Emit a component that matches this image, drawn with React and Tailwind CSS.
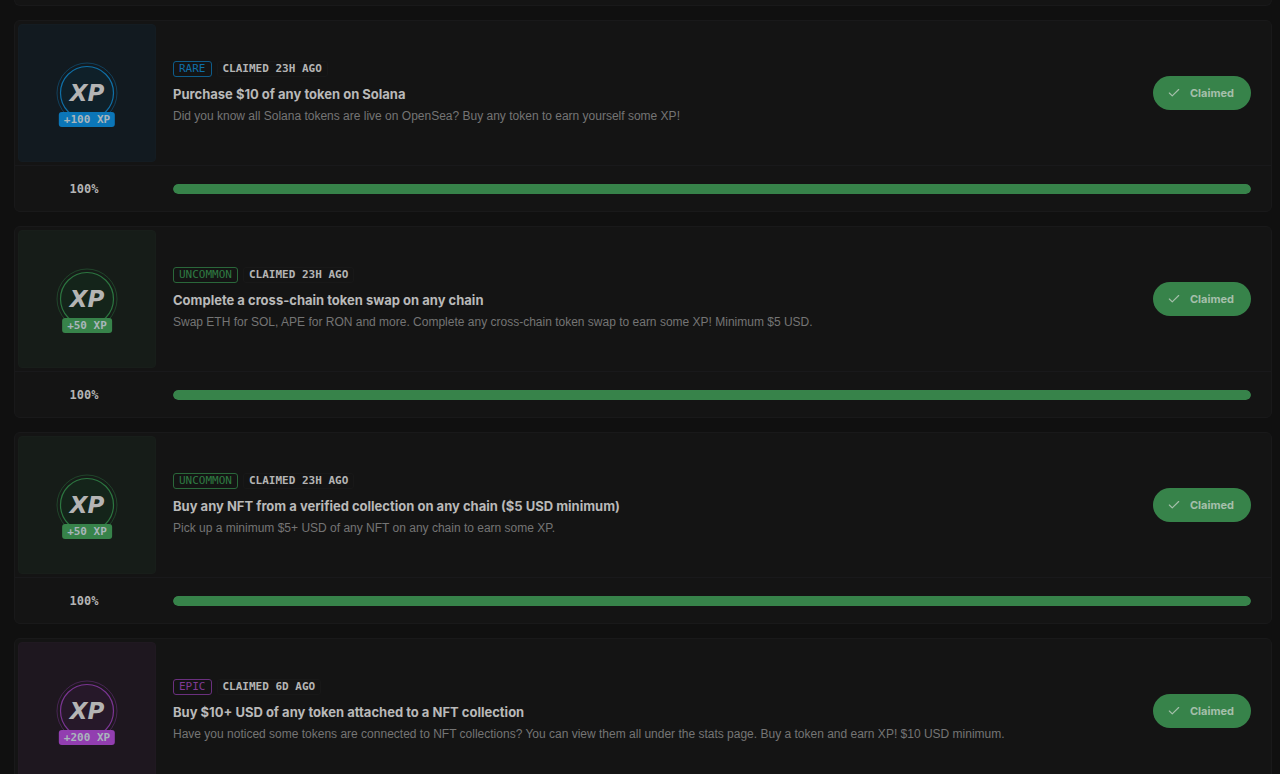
import { Check } from "lucide-react";
import clsx from "clsx";

const rarities = {
  rare: {
    label: "RARE",
    tile: "bg-[#121a20] border-[#141c22]",
    ring: "text-[#0f6fa6]",
    disc: "fill-[#0f2029]",
    tag: "border-[#0e5c8a] text-[#0f6fa8]",
    xp: "bg-[#0b76b8]",
  },
  uncommon: {
    label: "UNCOMMON",
    tile: "bg-[#161c18] border-[#181e1a]",
    ring: "text-[#2c7540]",
    disc: "fill-[#14241a]",
    tag: "border-[#2a673a] text-[#2f7a42]",
    xp: "bg-[#37834a]",
  },
  epic: {
    label: "EPIC",
    tile: "bg-[#1e171f] border-[#201921]",
    ring: "text-[#7a3592]",
    disc: "fill-[#261829]",
    tag: "border-[#6a307e] text-[#7f3a96]",
    xp: "bg-[#923eb0]",
  },
};

const quests = [
  {
    id: 1,
    rarity: "rare",
    xp: 100,
    claimed: "CLAIMED 23H AGO",
    title: "Purchase $10 of any token on Solana",
    description: "Did you know all Solana tokens are live on OpenSea? Buy any token to earn yourself some XP!",
    progress: 100,
  },
  {
    id: 2,
    rarity: "uncommon",
    xp: 50,
    claimed: "CLAIMED 23H AGO",
    title: "Complete a cross-chain token swap on any chain",
    description: "Swap ETH for SOL, APE for RON and more. Complete any cross-chain token swap to earn some XP! Minimum $5 USD.",
    progress: 100,
  },
  {
    id: 3,
    rarity: "uncommon",
    xp: 50,
    claimed: "CLAIMED 23H AGO",
    title: "Buy any NFT from a verified collection on any chain ($5 USD minimum)",
    description: "Pick up a minimum $5+ USD of any NFT on any chain to earn some XP.",
    progress: 100,
  },
  {
    id: 4,
    rarity: "epic",
    xp: 200,
    claimed: "CLAIMED 6D AGO",
    title: "Buy $10+ USD of any token attached to a NFT collection",
    description: "Have you noticed some tokens are connected to NFT collections? You can view them all under the stats page. Buy a token and earn XP! $10 USD minimum.",
  },
];

const XpMedal = ({ rarity, xp }) => (
  <div className="relative size-[62px]">
    <svg viewBox="0 0 62 62" className={clsx("size-full", rarity.ring)} aria-hidden="true">
      <circle cx="31" cy="31" r="30" fill="none" stroke="currentColor" strokeOpacity="0.45" />
      <circle cx="31" cy="31" r="26.5" className={rarity.disc} stroke="currentColor" strokeWidth="1.2" />
      <text
        x="31"
        y="39"
        textAnchor="middle"
        className="fill-[#b4b4b4] font-['DejaVu_Sans',sans-serif] text-[23px] font-bold italic"
      >
        XP
      </text>
    </svg>
    <span
      className={clsx(
        "absolute top-[50px] left-1/2 -translate-x-1/2 rounded-[3px] px-[5px] font-['DejaVu_Sans_Mono',monospace] text-[11px] leading-[15px] font-bold whitespace-nowrap text-[#a9b5bb]",
        rarity.xp
      )}
    >
      +{xp} XP
    </span>
  </div>
);

const QuestCard = ({ quest }) => {
  const rarity = rarities[quest.rarity];

  return (
    <article className="shrink-0 rounded-md border border-[#19191a] bg-[#141414]">
      <div className="flex items-center gap-[17px] border-b border-[#19191b] p-[3px] pr-5">
        <div className={clsx("flex size-[138px] shrink-0 items-center justify-center rounded-sm border", rarity.tile)}>
          <XpMedal rarity={rarity} xp={quest.xp} />
        </div>

        <div className="min-w-0 flex-1">
          <div className="flex items-center gap-[5px] font-['DejaVu_Sans_Mono',monospace] text-[11px] leading-[14px]">
            <span className={clsx("rounded-[3px] border px-[5px]", rarity.tag)}>{rarity.label}</span>
            <span className="rounded-[3px] border border-[#181818] px-[5px] font-bold text-[#b4b4b4]">
              {quest.claimed}
            </span>
          </div>
          <h3 className="mt-[7px] font-['Inter',sans-serif] text-[13px] leading-5 font-bold text-[#b9b9b9]">
            {quest.title}
          </h3>
          <p className="mt-1 text-[12px] leading-[17px] text-[#747474]">{quest.description}</p>
        </div>

        <button
          type="button"
          className="flex h-[34px] shrink-0 items-center gap-[9px] rounded-full bg-[#37834a] pr-[17px] pl-[14px] font-['Inter',sans-serif] text-[11px] font-bold text-[#a5bfab]"
        >
          <Check size={14} strokeWidth={2} />
          Claimed
        </button>
      </div>

      {/* Progress */}
      {quest.progress !== undefined && (
        <div className="flex h-[45px] items-center gap-5 pr-5">
          <span className="w-[138px] shrink-0 text-center font-['DejaVu_Sans_Mono',monospace] text-[12px] font-bold text-[#b4b4b4]">
            {quest.progress}%
          </span>
          <div
            role="progressbar"
            aria-label={quest.title}
            aria-valuenow={quest.progress}
            className="h-[10px] flex-1 overflow-hidden rounded-full bg-[#1d1d1d]"
          >
            <div className="h-full rounded-full bg-[#37834a]" style={{ width: `${quest.progress}%` }}></div>
          </div>
        </div>
      )}
    </article>
  );
};

const App = () => {
  return (
    <main className="flex h-screen flex-col gap-[14px] overflow-hidden bg-[#101010] pr-2 pl-[14px] font-['Liberation_Sans',sans-serif]">
      {/* Tail of the card scrolled off the top */}
      <div className="h-[6px] shrink-0 rounded-b-md border border-t-0 border-[#19191a] bg-[#141414]"></div>
      {quests.map((quest) => (
        <QuestCard key={quest.id} quest={quest} />
      ))}
    </main>
  );
};

export default App;
